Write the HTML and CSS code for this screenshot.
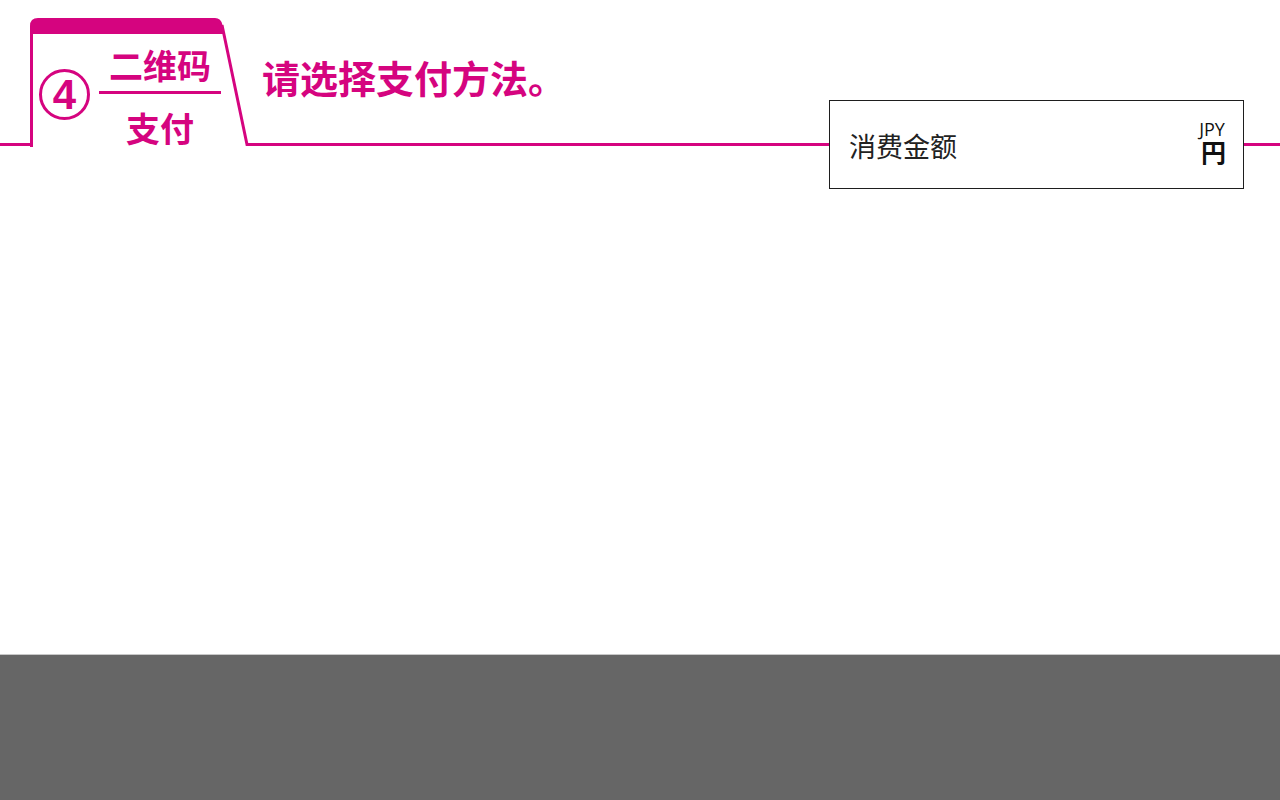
FILE: index.html
```html
<!DOCTYPE html>
<html lang="zh-CN">
<head>
<meta charset="utf-8">
<title>二维码支付</title>
<link rel="stylesheet" href="styles.css">
</head>
<body>
<div class="page">
  <header class="header">
    <div class="lead"></div>
    <div class="tab">
      <svg class="tab-frame" width="220" height="147" viewBox="0 0 220 147" aria-hidden="true">
        <path d="M1.5 147 V30" fill="none" stroke="#d5047f" stroke-width="3"/>
        <path d="M0 34 V26 Q0 18 8 18 H185 Q191 18 192.5 25 L194.5 34 Z" fill="#d5047f"/>
        <path d="M192 25 L217 144.5 H220" fill="none" stroke="#d5047f" stroke-width="3" stroke-linejoin="miter"/>
      </svg>
      <div class="tab-content">
        <div class="step-num">4</div>
        <div class="fraction">
          <div class="frac-top">二维码</div>
          <div class="frac-bar"></div>
          <div class="frac-bottom">支付</div>
        </div>
      </div>
    </div>
    <div class="mid">
      <h1 class="title">请选择支付方法。</h1>
    </div>
    <div class="amount-box">
      <span class="amount-label">消费金额</span>
      <span class="currency">
        <span class="cur-code">JPY</span>
        <span class="cur-sign">円</span>
      </span>
    </div>
    <div class="trail"></div>
  </header>
  <main class="main"></main>
  <footer class="footer"></footer>
</div>
</body>
</html>
```

FILE: styles.css
```css
html, body {
  margin: 0;
  padding: 0;
  background: #ffffff;
}

body {
  font-family: "Noto Sans CJK SC", "Noto Sans", sans-serif;
  color: #222;
}

.page {
  width: 1280px;
  height: 800px;
  display: flex;
  flex-direction: column;
}

.header {
  flex: none;
  height: 190px;
  display: flex;
  align-items: flex-start;
}

.lead {
  flex: none;
  width: 30px;
  height: 146px;
  box-sizing: border-box;
  border-bottom: 3px solid #d5047f;
}

.tab {
  flex: none;
  width: 220px;
  height: 147px;
  position: relative;
}

.tab-frame {
  position: absolute;
  left: 0;
  top: 0;
  display: block;
}

.tab-content {
  position: relative;
  display: flex;
  align-items: flex-start;
  padding-left: 9px;
}

.step-num {
  flex: none;
  margin-top: 69px;
  width: 51px;
  height: 51px;
  box-sizing: border-box;
  border: 3px solid #d5047f;
  border-radius: 50%;
  display: flex;
  align-items: center;
  justify-content: center;
  font-family: "Liberation Sans", Arial, sans-serif;
  font-weight: 700;
  font-size: 42px;
  line-height: 1;
  color: #d5047f;
  padding-top: 1px;
}

.fraction {
  flex: none;
  width: 122px;
  margin-left: 9px;
  margin-top: 48px;
  display: flex;
  flex-direction: column;
  align-items: center;
  color: #d5047f;
  font-weight: 700;
  font-size: 34px;
  line-height: 34px;
}

.frac-top,
.frac-bottom {
  height: 34px;
  white-space: nowrap;
}

.frac-bar {
  width: 122px;
  height: 3px;
  margin-top: 9px;
  background: #d5047f;
}

.frac-bottom {
  margin-top: 17px;
}

.mid {
  flex: none;
  width: 579px;
  height: 146px;
  box-sizing: border-box;
  border-bottom: 3px solid #d5047f;
  padding-left: 12px;
  padding-top: 58px;
}

.title {
  margin: 0;
  font-size: 38px;
  line-height: 1;
  font-weight: 700;
  color: #d5047f;
  white-space: nowrap;
}

.amount-box {
  flex: none;
  width: 415px;
  height: 89px;
  margin-top: 100px;
  box-sizing: border-box;
  border: 1px solid #1e1e1e;
  background: #fff;
  display: flex;
  align-items: center;
  justify-content: space-between;
  padding: 0 17px 0 19px;
}

.amount-label {
  font-size: 27px;
  line-height: 1;
  color: #222;
  padding-top: 1px;
}

.currency {
  align-self: flex-start;
  margin-top: 20px;
  display: flex;
  flex-direction: column;
  align-items: center;
}

.cur-code {
  font-family: "Open Sans", "Noto Sans", sans-serif;
  font-size: 18px;
  line-height: 16px;
  color: #111;
}

.cur-sign {
  font-size: 25px;
  line-height: 22px;
  font-weight: 700;
  color: #111;
  margin-left: 3px;
  margin-top: 3px;
}

.trail {
  flex: 1;
  height: 146px;
  box-sizing: border-box;
  border-bottom: 3px solid #d5047f;
}

.main {
  flex: 1;
  background: #fff;
}

.footer {
  flex: none;
  height: 145px;
  background: #666666;
  border-top: 1px solid #c8c8c8;
}
```
